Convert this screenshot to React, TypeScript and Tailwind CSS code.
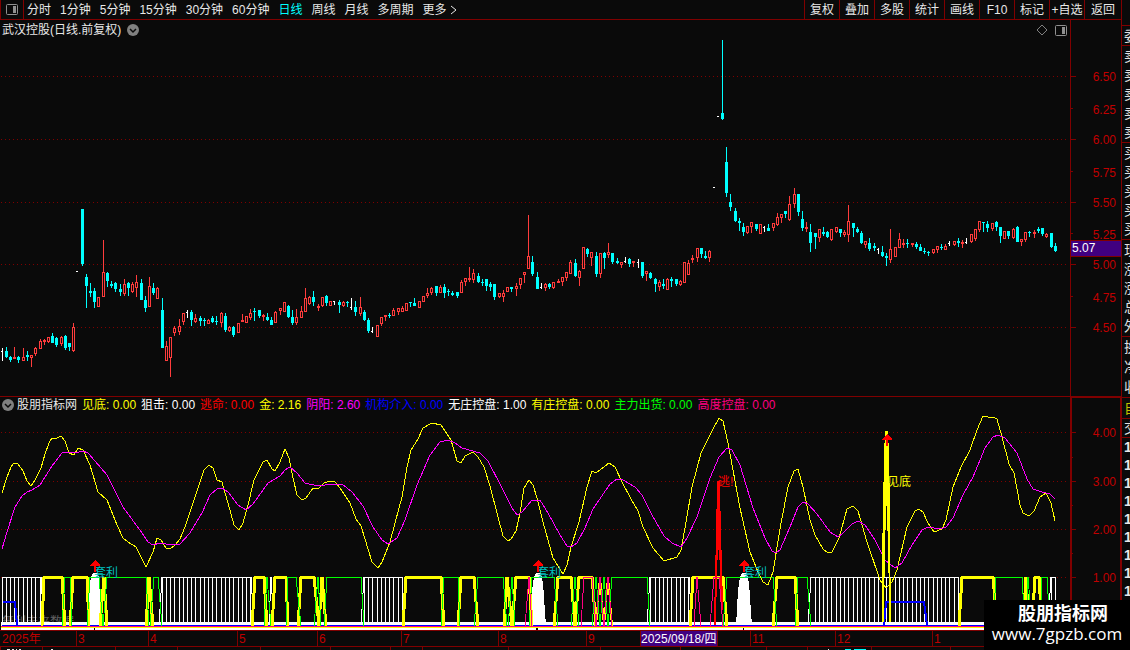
import React from "react";

type Candle = [number, string, number, number, number, number];

// x, kind (r = up, c = down, w = flat), high, body top, body bottom, low
const candles: Candle[] = [
  [2, "w", 348, 351, 351, 361], [6, "c", 347, 351, 357, 358], [10, "c", 356, 357, 360, 362], [14, "r", 347, 357, 359, 359],
  [18, "c", 356, 357, 360, 363], [23, "r", 348, 357, 361, 361], [27, "c", 351, 355, 357, 361], [31, "r", 355, 355, 358, 367],
  [35, "r", 347, 348, 354, 356], [40, "r", 339, 341, 349, 349], [44, "r", 339, 340, 342, 345], [48, "r", 337, 337, 342, 343],
  [52, "c", 333, 336, 343, 343], [56, "c", 337, 338, 345, 347], [61, "r", 336, 337, 344, 346], [65, "c", 335, 336, 348, 350],
  [69, "c", 343, 343, 347, 351], [73, "r", 323, 327, 351, 352], [77, "w", 271, 271, 271, 272], [82, "c", 209, 209, 264, 266],
  [86, "c", 274, 277, 286, 308], [90, "c", 283, 291, 293, 297], [94, "c", 288, 291, 302, 308], [98, "r", 297, 297, 307, 307],
  [103, "r", 240, 272, 297, 297], [107, "c", 272, 273, 281, 287], [111, "c", 281, 284, 286, 288], [115, "c", 282, 283, 289, 292],
  [120, "c", 284, 289, 292, 296], [124, "r", 279, 284, 294, 296], [128, "c", 282, 283, 288, 296], [132, "r", 282, 284, 292, 293],
  [136, "r", 275, 282, 288, 297], [141, "c", 279, 283, 300, 300], [145, "c", 296, 300, 308, 312], [149, "r", 277, 286, 307, 307],
  [153, "c", 283, 288, 293, 295], [157, "r", 287, 288, 299, 299], [162, "c", 298, 310, 348, 348], [166, "r", 341, 346, 361, 361],
  [170, "r", 337, 337, 358, 377], [174, "r", 326, 328, 333, 336], [179, "r", 319, 326, 332, 335], [183, "r", 313, 313, 322, 325],
  [187, "w", 310, 312, 312, 318], [191, "c", 310, 312, 320, 326], [195, "r", 314, 318, 322, 323], [200, "c", 316, 318, 321, 326],
  [204, "c", 318, 320, 321, 326], [208, "r", 319, 320, 324, 324], [212, "c", 316, 318, 322, 323], [216, "c", 316, 321, 322, 325],
  [221, "r", 312, 313, 323, 327], [225, "c", 313, 316, 330, 332], [229, "r", 326, 327, 331, 332], [233, "c", 326, 327, 335, 337],
  [238, "r", 323, 323, 333, 333], [242, "r", 314, 320, 322, 322], [246, "r", 316, 316, 323, 323], [250, "r", 309, 313, 318, 320],
  [254, "c", 308, 311, 312, 321], [259, "c", 310, 310, 316, 318], [263, "r", 314, 315, 317, 321], [267, "c", 313, 317, 320, 321],
  [271, "c", 317, 320, 325, 325], [275, "r", 311, 312, 323, 323], [280, "r", 308, 308, 311, 315], [284, "r", 302, 302, 312, 312],
  [288, "c", 305, 306, 317, 318], [292, "c", 310, 317, 323, 325], [296, "r", 309, 317, 323, 325], [301, "r", 306, 311, 318, 318],
  [305, "r", 288, 298, 312, 312], [309, "r", 296, 297, 304, 305], [313, "c", 291, 297, 302, 306], [318, "r", 304, 306, 308, 311],
  [322, "r", 297, 297, 306, 307], [326, "c", 295, 296, 303, 306], [330, "r", 301, 301, 306, 306], [334, "w", 301, 301, 301, 305],
  [339, "c", 300, 302, 305, 313], [343, "r", 301, 302, 306, 307], [347, "c", 301, 302, 303, 307], [351, "w", 298, 307, 307, 310],
  [355, "c", 301, 307, 312, 316], [360, "r", 297, 307, 314, 316], [364, "c", 310, 312, 320, 321], [368, "c", 318, 320, 331, 333],
  [372, "w", 327, 331, 331, 333], [377, "r", 325, 325, 337, 337], [381, "r", 317, 317, 324, 326], [385, "r", 315, 315, 317, 321],
  [389, "c", 313, 315, 316, 318], [393, "r", 308, 310, 316, 316], [398, "r", 308, 308, 312, 315], [402, "r", 306, 308, 312, 312],
  [406, "r", 303, 303, 311, 311], [410, "c", 302, 302, 303, 307], [414, "c", 298, 303, 306, 306], [419, "r", 301, 301, 308, 308],
  [423, "r", 296, 296, 302, 302], [427, "r", 288, 293, 296, 298], [431, "r", 287, 288, 293, 295], [436, "c", 286, 286, 293, 296],
  [440, "r", 285, 287, 293, 293], [444, "c", 284, 287, 293, 298], [448, "c", 289, 291, 292, 296], [452, "c", 291, 293, 295, 296],
  [457, "c", 292, 292, 296, 298], [461, "r", 280, 282, 293, 293], [465, "r", 278, 278, 282, 286], [469, "r", 267, 278, 280, 282],
  [473, "r", 269, 273, 280, 283], [478, "c", 273, 276, 282, 283], [482, "c", 279, 282, 283, 286], [486, "c", 279, 279, 286, 291],
  [490, "c", 282, 284, 287, 291], [494, "c", 284, 284, 297, 300], [499, "r", 293, 293, 297, 298], [503, "r", 290, 293, 297, 302],
  [507, "r", 287, 287, 292, 292], [511, "c", 287, 287, 289, 292], [516, "r", 283, 286, 289, 296], [520, "r", 278, 278, 285, 289],
  [524, "r", 272, 272, 275, 283], [528, "r", 215, 256, 269, 269], [532, "c", 256, 262, 274, 276], [537, "c", 272, 277, 289, 289],
  [541, "w", 283, 287, 287, 289], [545, "r", 283, 284, 288, 291], [549, "c", 283, 284, 287, 289], [553, "r", 282, 282, 288, 289],
  [558, "r", 279, 281, 283, 283], [562, "r", 277, 277, 282, 286], [566, "r", 272, 272, 278, 281], [570, "r", 260, 262, 274, 274],
  [575, "c", 259, 263, 276, 277], [579, "r", 270, 271, 278, 286], [583, "r", 247, 247, 269, 269], [587, "c", 248, 249, 254, 257],
  [591, "r", 252, 252, 258, 266], [596, "c", 252, 256, 274, 277], [600, "r", 253, 253, 274, 278], [604, "c", 252, 253, 258, 269],
  [608, "r", 243, 252, 255, 258], [612, "c", 253, 253, 262, 264], [617, "c", 258, 261, 263, 264], [621, "r", 262, 262, 265, 268],
  [625, "w", 257, 261, 261, 263], [629, "c", 258, 259, 264, 267], [633, "r", 261, 261, 263, 267], [638, "w", 259, 262, 262, 268],
  [642, "c", 262, 262, 276, 278], [646, "r", 271, 271, 274, 281], [650, "c", 272, 273, 278, 279], [655, "c", 278, 279, 284, 292],
  [659, "r", 280, 282, 287, 291], [663, "c", 279, 284, 286, 289], [667, "r", 278, 279, 290, 290], [671, "c", 277, 279, 281, 287],
  [676, "c", 279, 279, 284, 286], [680, "r", 280, 281, 285, 286], [684, "r", 262, 262, 283, 283], [688, "r", 260, 263, 275, 275],
  [692, "r", 255, 258, 260, 263], [697, "r", 248, 248, 258, 262], [701, "c", 248, 248, 254, 258], [705, "c", 251, 256, 258, 259],
  [709, "r", 250, 251, 258, 262], [714, "w", 187, 187, 187, 188], [718, "w", 116, 116, 116, 117], [722, "c", 40, 113, 119, 120],
  [726, "c", 147, 162, 193, 197], [730, "c", 194, 202, 207, 211], [735, "c", 208, 211, 221, 222], [739, "c", 218, 221, 223, 231],
  [743, "c", 223, 227, 232, 236], [747, "r", 226, 226, 233, 234], [751, "r", 222, 222, 227, 233], [756, "c", 224, 224, 229, 231],
  [760, "r", 224, 224, 234, 234], [764, "w", 226, 227, 227, 232], [768, "c", 224, 228, 231, 231], [773, "r", 223, 223, 228, 231],
  [777, "r", 213, 217, 225, 226], [781, "r", 214, 214, 218, 223], [785, "c", 211, 211, 214, 218], [789, "r", 196, 204, 220, 221],
  [794, "r", 188, 194, 204, 208], [798, "c", 194, 194, 212, 216], [802, "c", 211, 219, 228, 231], [806, "r", 222, 227, 229, 232],
  [810, "c", 224, 232, 243, 252], [815, "c", 233, 233, 237, 249], [819, "r", 229, 229, 238, 242], [823, "c", 227, 232, 234, 236],
  [827, "c", 231, 232, 237, 238], [831, "r", 229, 229, 240, 241], [836, "r", 227, 227, 232, 233], [840, "c", 229, 229, 233, 237],
  [844, "r", 230, 232, 235, 237], [848, "r", 205, 221, 235, 242], [853, "c", 223, 223, 228, 237], [857, "c", 227, 229, 232, 233],
  [861, "c", 231, 233, 243, 244], [865, "r", 241, 241, 245, 248], [869, "c", 238, 243, 249, 251], [874, "c", 243, 246, 248, 251],
  [878, "w", 248, 249, 249, 254], [882, "c", 246, 252, 256, 257], [886, "c", 253, 256, 258, 266], [890, "r", 229, 249, 260, 263],
  [895, "r", 247, 247, 257, 257], [899, "r", 233, 239, 248, 248], [903, "r", 239, 243, 245, 248], [907, "c", 239, 243, 244, 248],
  [912, "r", 243, 243, 245, 247], [916, "c", 242, 244, 247, 249], [920, "c", 244, 247, 251, 251], [924, "c", 248, 251, 252, 254],
  [928, "c", 251, 252, 253, 256], [933, "r", 249, 249, 253, 254], [937, "r", 246, 246, 250, 253], [941, "c", 244, 247, 248, 250],
  [945, "r", 244, 246, 250, 250], [949, "w", 241, 243, 243, 246], [954, "r", 241, 241, 245, 246], [958, "c", 238, 241, 243, 247],
  [962, "r", 240, 242, 244, 248], [966, "w", 238, 242, 242, 244], [971, "r", 234, 234, 242, 243], [975, "r", 229, 229, 239, 241],
  [979, "r", 221, 221, 230, 232], [983, "c", 222, 222, 223, 232], [987, "c", 221, 224, 228, 232], [992, "r", 223, 223, 229, 231],
  [996, "c", 221, 222, 227, 231], [1000, "c", 227, 227, 236, 243], [1004, "r", 231, 231, 239, 239], [1008, "c", 231, 231, 236, 239],
  [1013, "r", 228, 229, 238, 239], [1017, "c", 226, 227, 242, 242], [1021, "r", 239, 239, 242, 246], [1025, "r", 232, 232, 240, 242],
  [1029, "c", 231, 232, 233, 237], [1034, "r", 230, 232, 234, 238], [1038, "c", 227, 229, 231, 233], [1042, "c", 228, 228, 234, 236],
  [1046, "r", 233, 234, 237, 238], [1051, "c", 233, 233, 247, 248], [1055, "c", 243, 246, 251, 252],
];

const goldLine =
  "2,493 7,477 11,467 14,463 18,464 23,471 27,481 31,486 35,480 41,468 45,454 49,443 52,438 57,438 61,436 65,441 69,453 74,455 78,448 83,450 90,465 98,492 107,500 117,525 123,538 128,542 136,547 146,567 153,552 157,538 161,540 166,548 170,549 175,545 180,539 185,527 204,470 209,465 213,468 217,480 222,482 230,510 234,525 239,530 243,523 248,505 254,480 263,462 267,460 272,469 275,471 280,462 285,449 289,458 293,478 297,495 302,500 306,498 313,488 319,488 324,483 330,481 335,482 340,488 350,503 356,519 361,526 372,562 378,568 382,562 390,542 395,523 402,497 407,467 411,450 418,439 423,428 432,423 441,425 451,440 457,461 461,463 465,456 473,452 478,457 484,467 490,486 497,513 503,536 508,541 511,539 516,531 520,513 524,488 529,480 533,485 537,498 543,522 553,558 563,574 567,565 571,547 579,522 587,487 592,471 596,473 609,463 615,467 622,482 631,499 638,511 643,527 653,548 664,561 677,557 681,550 685,528 692,487 701,453 713,429 719,418 723,421 728,443 740,508 750,552 758,572 763,582 768,585 773,572 781,523 788,487 794,471 798,469 803,487 810,520 815,535 823,549 828,553 832,552 839,538 847,509 853,506 858,511 867,542 880,580 886,588 892,582 897,570 907,527 915,511 919,509 923,512 928,523 934,532 942,529 946,520 953,487 961,467 970,450 977,430 983,416 988,417 993,417 997,419 1001,433 1009,464 1014,473 1020,505 1023,513 1029,516 1034,511 1040,497 1046,493 1051,503 1055,521";

const yinYangLine =
  "2,549 7,532 15,507 22,496 27,492 32,490 40,485 52,466 62,453 67,452 75,453 83,451 88,453 95,461 107,475 123,507 142,533 148,542 153,545 160,543 172,545 180,544 190,533 202,513 210,495 217,489 222,488 228,492 238,505 246,510 253,504 268,483 280,476 285,470 290,467 297,473 305,483 318,486 333,484 342,484 352,492 363,506 373,527 382,540 388,544 397,538 405,520 417,485 430,455 440,442 448,440 455,443 462,448 480,453 488,461 502,488 512,508 517,515 522,512 532,500 540,500 548,513 560,535 567,546 571,547 577,543 585,528 593,509 610,484 617,479 623,480 635,487 642,495 652,515 664,536 672,543 681,547 687,538 697,517 710,478 719,457 727,448 732,450 740,465 753,508 765,538 772,551 776,553 780,550 790,527 798,507 803,502 808,504 817,514 830,532 838,537 843,533 852,524 858,521 865,525 875,540 885,560 895,568 902,563 912,545 922,530 928,527 940,529 946,527 953,518 963,495 973,477 985,448 993,437 998,435 1005,438 1017,453 1027,479 1033,489 1042,492 1050,494 1055,499";

const yellowSteps = [
  "42,626 44,577 62,577 65,626", "70,626 73,577 87,577 89,626", "100,626 104,577 107,626", "146,626 149,577 153,626",
  "252,626 255,577 264,577 267,626", "272,626 275,577 286,577 288,626", "298,626 301,577 314,577 319,626 322,577 326,626",
  "403,626 406,577 441,577 444,626", "458,626 461,577 474,577 478,626", "504,626 507,577 512,626 516,577 529,577 532,626",
  "554,626 558,577 571,577 575,626 579,577 592,577 596,626", "690,626 693,577 723,577 727,626", "773,626 777,577 795,577 798,626",
  "959,626 962,577 993,577 997,626", "1023,626 1026,577 1029,626", "1032,626 1035,577 1039,577 1042,626",
];

const greenSteps = [
  "62,626 65,577 70,577 72,626", "87,626 90,577 99,577 103,626 107,577 146,577 149,626", "150,626 154,577 158,577 162,626",
  "264,626 267,577 271,626", "286,626 288,577 296,577 301,626", "314,626 318,577 321,626", "324,626 327,577 361,577 364,626",
  "441,626 444,577 458,577 460,626", "474,626 478,577 503,577 507,626", "508,626 512,577 515,626", "529,626 532,577 554,577 558,626",
  "571,626 575,577 579,626", "592,626 596,577 600,626 604,577 608,626 612,577 647,577 650,626", "723,626 727,577 773,577 777,626",
  "795,626 798,577 807,577 811,626", "993,626 996,577 1022,577 1025,626", "1026,626 1028,577 1032,626", "1040,626 1042,577 1047,577 1050,626",
];

const pinkSteps = [
  "525,626 529,577 532,626", "581,626 584,577 592,577 596,626 600,577 604,626 608,577 612,626", "694,626 697,577 701,626",
  "710,626 714,577 719,577 723,626",
];

// stretches where the control bars are drawn as a white comb
const combs = [[2, 41], [162, 251], [364, 402], [650, 689], [811, 959], [1051, 1055]];

const periods = ["分时", "1分钟", "5分钟", "15分钟", "30分钟", "60分钟", "日线", "周线", "月线", "多周期"];
const tools = ["复权", "叠加", "多股", "统计", "画线", "F10", "标记", "+自选", "返回"];

const readings = [
  { name: "见底", value: "0.00", color: "text-[#ffff00]" },
  { name: "狙击", value: "0.00", color: "text-white" },
  { name: "逃命", value: "0.00", color: "text-[#ff0000]" },
  { name: "金", value: "2.16", color: "text-[#ffff00]" },
  { name: "阴阳", value: "2.60", color: "text-[#ff00ff]" },
  { name: "机构介入", value: "0.00", color: "text-[#0000ff]" },
  { name: "无庄控盘", value: "1.00", color: "text-white" },
  { name: "有庄控盘", value: "0.00", color: "text-[#ffff00]" },
  { name: "主力出货", value: "0.00", color: "text-[#00ff00]" },
  { name: "高度控盘", value: "0.00", color: "text-[#ff0080]" },
];

const months = [
  { label: "2025年", width: "w-[76px]" },
  { label: "3", width: "w-[72px]" },
  { label: "4", width: "w-[89px]" },
  { label: "5", width: "w-[80px]" },
  { label: "6", width: "w-[84px]" },
  { label: "7", width: "w-[97px]" },
  { label: "8", width: "w-[88px]" },
  { label: "9", width: "w-[54px]" },
];
const lateMonths = [
  { label: "11", width: "w-[85px]" },
  { label: "12", width: "w-[97px]" },
  { label: "1", width: "flex-1" },
];

const quoteGroups = [
  { height: "h-[20px]", rows: ["委"], color: "text-[#e0e0e0]" },
  { height: "h-[97px]", rows: ["卖", "卖", "卖", "卖", "卖"], color: "text-[#e0e0e0]" },
  { height: "h-[97px]", rows: ["买", "买", "买", "买", "买"], color: "text-[#e0e0e0]" },
  { height: "h-[97px]", rows: ["现", "涨", "涨", "总", "外"], color: "text-[#e0e0e0]" },
  { height: "h-[61px]", rows: ["换", "净", "收"], color: "text-[#e0e0e0]" },
  { height: "h-[21px]", rows: ["自"], color: "text-[#c0c000]" },
  { height: "h-[19px]", rows: ["交"], color: "text-[#e0e0e0]" },
];

const Grid = ({ rows }: { rows: number[] }) => (
  <g stroke="#800000" strokeDasharray="1 3">
    {rows.map((y) => (
      <line key={y} x1="1" x2="1068" y1={y + 0.5} y2={y + 0.5} />
    ))}
  </g>
);

const CandleMark = ({ data }: { data: Candle }) => {
  const [x, kind, high, top, bottom, low] = data;
  if (kind === "w") {
    return (
      <g fill="#ffffff">
        <rect x={x} y={high} width={1} height={low - high} />
        <rect x={x - 1} y={top} width={2} height={1} />
      </g>
    );
  }
  if (kind === "c") {
    return (
      <g fill="#00ffff">
        <rect x={x} y={high} width={1} height={low - high} />
        <rect x={x - 1} y={top} width={3} height={bottom - top} />
      </g>
    );
  }
  return (
    <g fill="#ff3c3c">
      <rect x={x} y={high} width={1} height={low - high} />
      <rect x={x - 1} y={top} width={3} height={bottom - top} />
      {bottom - top > 2 && <rect x={x} y={top + 1} width={1} height={bottom - top - 2} fill="#0a0a0a" />}
    </g>
  );
};

const Arrow = ({ x, y }: { x: number; y: number }) => (
  <path d={`M${x} ${y}l5 5v1h-4v6h-2v-6h-4v-1z`} fill="#ff0000" />
);

const ChevronBadge = () => (
  <svg width="12" height="12" viewBox="0 0 12 12">
    <circle cx="6" cy="6" r="6" fill="#808080" />
    <path d="M3 5l3 3 3-3" fill="none" stroke="#0a0a0a" strokeWidth="1.5" />
  </svg>
);

const PaneIcon = () => (
  <svg width="12" height="11" viewBox="0 0 12 11">
    <rect x="0.5" y="0.5" width="11" height="10" rx="1" fill="none" stroke="#909090" />
    <rect x="7" y="2" width="3" height="7" fill="#909090" />
  </svg>
);

const PriceChart = () => (
  <svg className="block w-full" viewBox="0 40 1070 356" preserveAspectRatio="xMinYMin meet" shapeRendering="crispEdges">
    <Grid rows={[76, 139, 202, 264, 327]} />
    {candles.map((c) => (
      <CandleMark key={c[0]} data={c} />
    ))}
  </svg>
);

const IndicatorChart = () => (
  <svg className="block w-full text-[12px]" viewBox="0 413 1070 217" preserveAspectRatio="xMinYMin meet" shapeRendering="crispEdges">
    <Grid rows={[432, 481, 529, 577]} />
    <text x="2" y="626" fill="#606060">無利未来数据</text>

    {/* white comb and base band */}
    {combs.map(([from, to]) => (
      <g key={from} fill="#ffffff">
        <rect x={from} y={577} width={to - from} height={1} />
        {candles
          .filter((c) => c[0] >= from && c[0] <= to)
          .map((c) => (
            <rect key={c[0]} x={c[0]} y={577} width={1} height={46} />
          ))}
      </g>
    ))}
    <g fill="none" stroke="#ffffff">
      <polyline points="41,577 44,626" />
      <polyline points="159,626 162,577" />
      <polyline points="251,577 254,626" />
      <polyline points="269,626 271,577 274,626" />
      <polyline points="361,626 364,577" />
      <polyline points="402,577 405,626" />
      <polyline points="647,626 650,577" />
      <polyline points="689,577 692,626" />
      <polyline points="808,626 811,577" />
      <polyline points="1048,626 1051,577" />
    </g>
    <rect x="1" y="622" width="1055" height="8" fill="#ffffff" />
    {[95, 538, 744].map((x) => (
      <polygon key={x} fill="#ffffff" points={`${x - 8},626 ${x - 6},590 ${x - 4},577 ${x - 2},573 ${x + 3},573 ${x + 5},583 ${x + 8},626`} />
    ))}

    <g fill="none" stroke="#0000ff" strokeWidth="2">
      <polyline points="3,602 15,602 17,625" />
      <polyline points="884,625 886,602 924,602 927,625" />
    </g>
    <rect x="2" y="625" width="1054" height="1" fill="#0000ff" />
    <g fill="none" stroke="#ffff00" strokeWidth="3">
      {yellowSteps.map((p) => (
        <polyline key={p} points={p} />
      ))}
    </g>
    <polyline points="596,626 600,577 604,626 608,577 612,626" fill="none" stroke="#ffff00" strokeWidth="2" />
    <g fill="none" stroke="#00ff00">
      {greenSteps.map((p) => (
        <polyline key={p} points={p} />
      ))}
    </g>
    <polygon points="717,481 720,481 721,540 722,560 723,610 721,610 720,570 719,550 718,550 717,570 716,625 714,625 715,570 716,540" fill="#ff0000" />
    <g fill="none" stroke="#ff0080">
      {pinkSteps.map((p) => (
        <polyline key={p} points={p} />
      ))}
    </g>
    <rect x="1" y="626" width="1055" height="2" fill="#ffff00" />
    <rect x="1" y="626" width="1055" height="1" fill="#ff0080" />

    <polyline points={goldLine} fill="none" stroke="#ffff00" />
    <polyline points={yinYangLine} fill="none" stroke="#ff00ff" />
    <polygon points="885,431 888,431 889,455 890,510 890,555 891,600 891,622 889,622 889,590 888,555 887,506 886,506 885,555 884,600 884,622 882,622 882,556 883,510 884,455" fill="#ffff00" />

    {/* signals */}
    <g fill="#00c0c0">
      <text x="94" y="577">套利</text>
      <text x="537" y="577">套利</text>
      <text x="743" y="577">套利</text>
    </g>
    <text x="718" y="486" fill="#ff0000">逃!</text>
    <text x="887" y="486" fill="#ffff00">见底</text>
    <Arrow x={95} y={560} />
    <Arrow x={538} y={560} />
    <Arrow x={744} y={560} />
    <Arrow x={887} y={434} />
    <g fill="#0a0a0a">
      <rect x="94" y="628" width="1" height="2" />
      <rect x="536" y="628" width="2" height="2" />
      <rect x="743" y="628" width="1" height="2" />
    </g>
  </svg>
);

const PriceAxis = () => (
  <svg className="block text-[12px]" width="51" height="376" viewBox="1070 20 51 376">
    <g fill="#800000" shapeRendering="crispEdges">
      <rect x="1070" y="20" width="1" height="376" />
      {[76, 139, 202, 264, 327].map((y) => (
        <rect key={y} x="1071" y={y} width="5" height="1" />
      ))}
      {[108, 171, 233, 296].map((y) => (
        <rect key={y} x="1071" y={y} width="2" height="1" />
      ))}
    </g>
    <g fill="#c00000" textAnchor="end">
      <text x="1116" y="81">6.50</text>
      <text x="1116" y="114">6.25</text>
      <text x="1116" y="144">6.00</text>
      <text x="1116" y="177">5.75</text>
      <text x="1116" y="207">5.50</text>
      <text x="1116" y="239">5.25</text>
      <text x="1116" y="269">5.00</text>
      <text x="1116" y="302">4.75</text>
      <text x="1116" y="332">4.50</text>
    </g>
    <rect x="1070.5" y="240.5" width="51" height="16" fill="#400080" stroke="#800000" />
    <text x="1072" y="252" fill="#ffffff">5.07</text>
  </svg>
);

const IndicatorAxis = () => (
  <svg className="block text-[12px]" width="51" height="254" viewBox="1070 396 51 254">
    <g fill="#800000" shapeRendering="crispEdges">
      <rect x="1070" y="396" width="51" height="2" />
      <rect x="1070" y="396" width="2" height="254" />
      <rect x="1120" y="396" width="1" height="254" />
      {[432, 481, 529, 577].map((y) => (
        <rect key={y} x="1072" y={y} width="4" height="1" />
      ))}
      {[457, 505, 553].map((y) => (
        <rect key={y} x="1072" y={y} width="1" height="1" />
      ))}
    </g>
    <g fill="#c00000" textAnchor="end">
      <text x="1116" y="437">4.00</text>
      <text x="1116" y="486">3.00</text>
      <text x="1116" y="534">2.00</text>
      <text x="1116" y="582">1.00</text>
    </g>
  </svg>
);

// upper edge of the tab strip under the date scale
const TabStripEdge = () => (
  <svg className="block w-full" viewBox="0 0 1070 3" preserveAspectRatio="xMinYMin meet" shapeRendering="crispEdges">
    <g fill="#800000">
      {[0, 42, 115, 177, 260, 330, 390, 422, 508, 600, 680, 766, 807, 871, 950].map((x) => (
        <rect key={x} x={x} y="0" width="1" height="3" />
      ))}
    </g>
    <path d="M7 2h3M12 2h2M16 2h1M19 2h2M51 2h2M828 2h1" stroke="#e8e8e8" />
    <path d="M845 2h6M854 2h12" stroke="#00ffff" />
  </svg>
);

const App = () => {
  return (
    <div className="relative flex min-h-screen overflow-hidden bg-[#0a0a0a] font-['Liberation_Sans','Noto_Sans_CJK_SC',sans-serif] text-[12px] leading-[16px] text-[#e8e8e8]">
      <div className="flex min-w-0 flex-1 flex-col">
        {/* toolbar */}
        <header className="flex h-5 items-center border-b border-[#800000]">
          <button aria-label="侧栏" className="flex h-full w-6 items-center justify-center border-x border-[#800000]">
            <PaneIcon />
          </button>
          <nav className="ml-[3px] flex items-center gap-[9px] whitespace-nowrap">
            {periods.map((p) => (
              <button key={p} className={p === "日线" ? "text-[#00ffff]" : ""}>
                {p}
              </button>
            ))}
            <button className="flex items-center">
              更多
              <svg width="10" height="12" viewBox="0 0 10 12">
                <path d="M4 2l5 4-5 4" fill="none" stroke="#e8e8e8" />
              </svg>
            </button>
          </nav>
          <div className="ml-auto flex h-full">
            {tools.map((t) => (
              <button key={t} className="h-full w-[35px] whitespace-nowrap border-l border-[#800000] text-center last:w-[37px]">
                {t}
              </button>
            ))}
          </div>
        </header>

        {/* price chart */}
        <section className="flex">
          <div className="min-w-0 flex-1">
            <div className="flex h-5 items-center gap-1 pl-[2px] pr-[3px]">
              <h1>武汉控股(日线.前复权)</h1>
              <button aria-label="展开" className="ml-[2px]">
                <ChevronBadge />
              </button>
              <button aria-label="标记" className="ml-auto">
                <svg width="12" height="12" viewBox="0 0 12 12">
                  <path d="M6 1l5 5-5 5-5-5z" fill="none" stroke="#808080" />
                </svg>
              </button>
              <button aria-label="分栏" className="ml-[3px]">
                <PaneIcon />
              </button>
            </div>
            <PriceChart />
          </div>
          <PriceAxis />
        </section>

        {/* indicator chart */}
        <section className="flex">
          <div className="min-w-0 flex-1 border-t border-[#800000]">
            <div className="flex h-4 items-center gap-[5px] whitespace-nowrap pl-[2px]">
              <button aria-label="展开指标" className="-mr-[2px]">
                <ChevronBadge />
              </button>
              <span>股朋指标网</span>
              {readings.map((r) => (
                <span key={r.name} className={r.color}>
                  {r.name}: {r.value}
                </span>
              ))}
            </div>
            <IndicatorChart />
            <div className="flex h-[17px] border-y border-[#800000] text-[#c00000]">
              {months.map((m, i) => (
                <span key={m.label} className={`${m.width} ${i > 0 ? "border-l border-[#800000] pl-[1px]" : "pl-[2px]"}`}>
                  {m.label}
                </span>
              ))}
              <span className="w-[78px] whitespace-nowrap border-x border-[#800000] bg-[#400080] text-white">2025/09/18/四</span>
              <span className="w-8" />
              {lateMonths.map((m) => (
                <span key={m.label} className={`${m.width} border-l border-[#800000] pl-[1px]`}>
                  {m.label}
                </span>
              ))}
            </div>
            <TabStripEdge />
          </div>
          <IndicatorAxis />
        </section>
      </div>

      {/* quote panel, only its edge is in view */}
      <aside className="flex w-[9px] flex-col overflow-hidden border-l border-[#800000] pt-[25px]">
        {quoteGroups.map((g, i) => (
          <div key={i} className={`${g.height} ${g.color} flex shrink-0 flex-col justify-around border-t border-[#800000] pl-[2px] text-[14px] leading-[18px]`}>
            {g.rows.map((r, j) => (
              <span key={j}>{r}</span>
            ))}
          </div>
        ))}
        <div className="border-t border-[#800000] pl-[2px] text-[14px] font-bold leading-[18px]">
          {Array.from({ length: 9 }, (_, i) => (
            <div key={i}>1</div>
          ))}
        </div>
      </aside>

      {/* site badge over the corner */}
      <div className="absolute bottom-0 right-0 flex h-[50px] w-[146px] flex-col items-center bg-black pt-1 text-white">
        <span className="pl-3 text-[18px] font-bold leading-[20px]">股朋指标网</span>
        <span className="whitespace-nowrap font-['Open_Sans',sans-serif] text-[17px] leading-[20px]">www.7gpzb.com</span>
      </div>
    </div>
  );
};

export default App;
